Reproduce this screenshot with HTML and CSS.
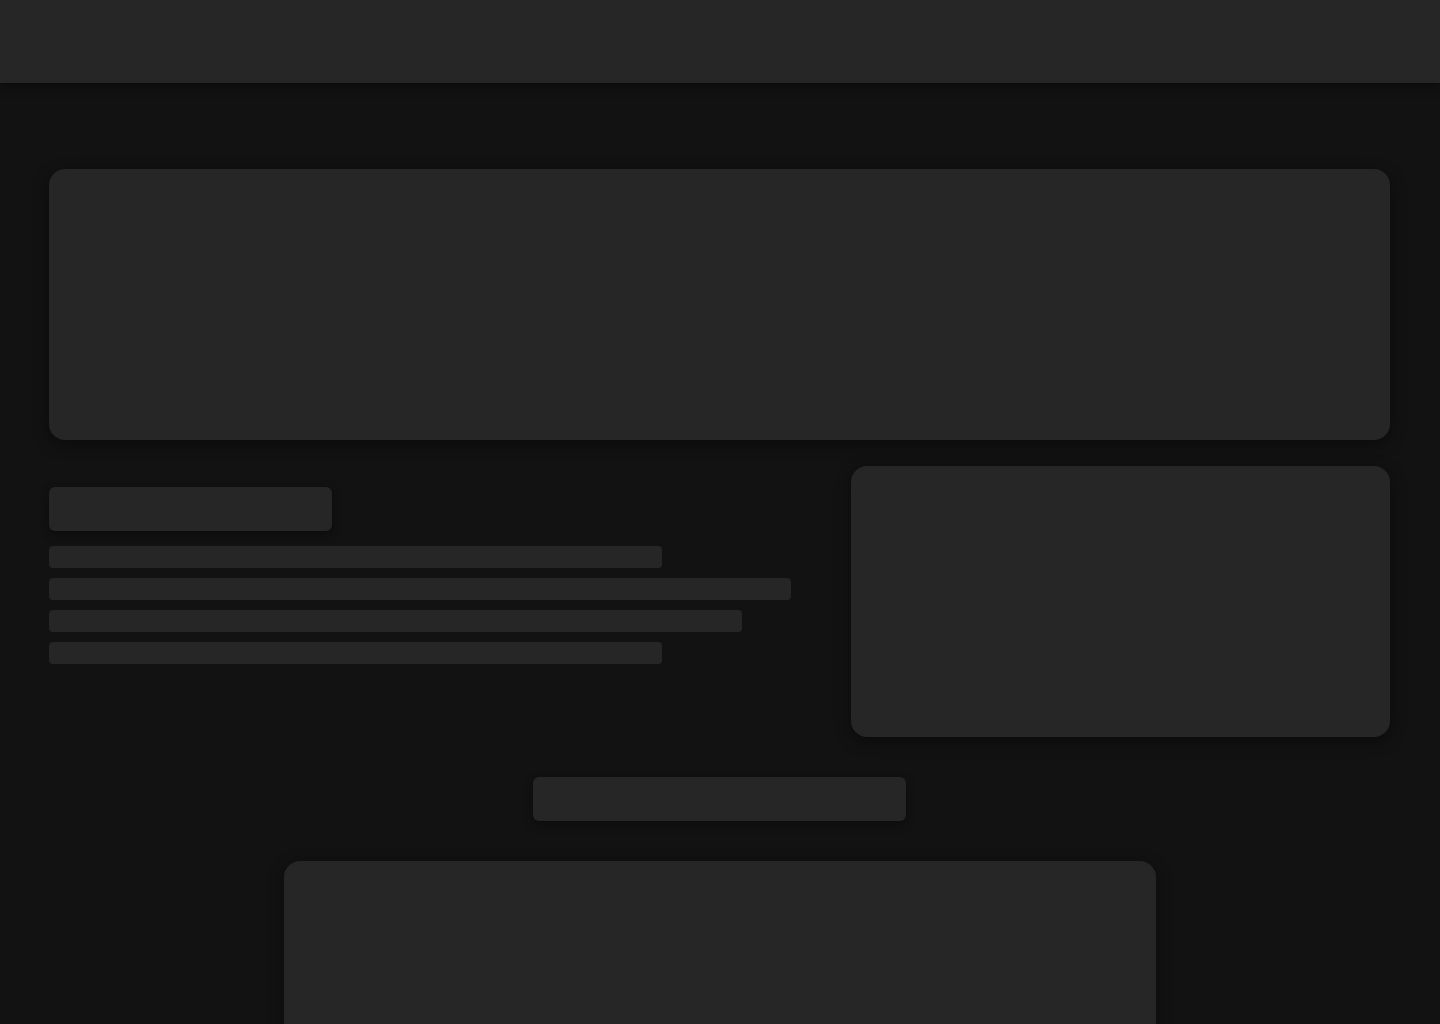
FILE: index.html
```html
<!DOCTYPE html>
<html lang="en">
<head>
    <meta charset="UTF-8">
    <meta name="viewport" content="width=device-width, initial-scale=1.0">
    <title>Loading</title>
    <link rel="stylesheet" href="styles.css">
</head>
<body>
    <header class="topbar"></header>

    <main class="page">
        <section class="skeleton hero"></section>

        <section class="row">
            <div class="intro">
                <div class="skeleton title"></div>
                <div class="skeleton line w83"></div>
                <div class="skeleton line w100"></div>
                <div class="skeleton line w93"></div>
                <div class="skeleton line w83"></div>
            </div>
            <div class="skeleton side-card"></div>
        </section>

        <div class="skeleton button"></div>

        <section class="skeleton panel"></section>
    </main>
</body>
</html>
```

FILE: styles.css
```css
:root {
    --bg: #121212;
    --surface: #262626;
}

* {
    box-sizing: border-box;
    margin: 0;
    padding: 0;
}

html, body {
    height: 100%;
}

body {
    font-family: 'Inter', 'Liberation Sans', sans-serif;
    background-color: var(--bg);
    overflow: hidden;
}

.topbar {
    height: 83px;
    background-color: var(--surface);
    box-shadow: 0 2px 10px rgba(0, 0, 0, 0.5);
    position: relative;
    z-index: 1;
}

.page {
    padding: 86px 50px 0 49px;
    display: flex;
    flex-direction: column;
    align-items: center;
}

.skeleton {
    background-color: var(--surface);
}

.hero {
    width: 100%;
    height: 271px;
    border-radius: 16px;
    box-shadow: 0 4px 16px rgba(0, 0, 0, 0.45);
}

.row {
    width: 100%;
    display: flex;
    gap: 60px;
    margin-top: 26px;
}

.intro {
    width: 742px;
    padding-top: 21px;
    display: flex;
    flex-direction: column;
    gap: 10px;
}

.title {
    width: 283px;
    height: 44px;
    border-radius: 6px;
    margin-bottom: 5px;
    box-shadow: 0 3px 10px rgba(0, 0, 0, 0.4);
}

.line {
    height: 22px;
    border-radius: 4px;
}

.w100 { width: 100%; }
.w93 { width: 693px; }
.w83 { width: 613px; }

.side-card {
    flex: 1;
    height: 271px;
    border-radius: 16px;
    box-shadow: 0 4px 16px rgba(0, 0, 0, 0.45);
}

.button {
    width: 373px;
    height: 44px;
    border-radius: 6px;
    margin-top: 40px;
    box-shadow: 0 3px 10px rgba(0, 0, 0, 0.4);
}

.panel {
    width: 872px;
    height: 300px;
    margin-top: 40px;
    border-radius: 16px;
    box-shadow: 0 4px 16px rgba(0, 0, 0, 0.45);
}
```
